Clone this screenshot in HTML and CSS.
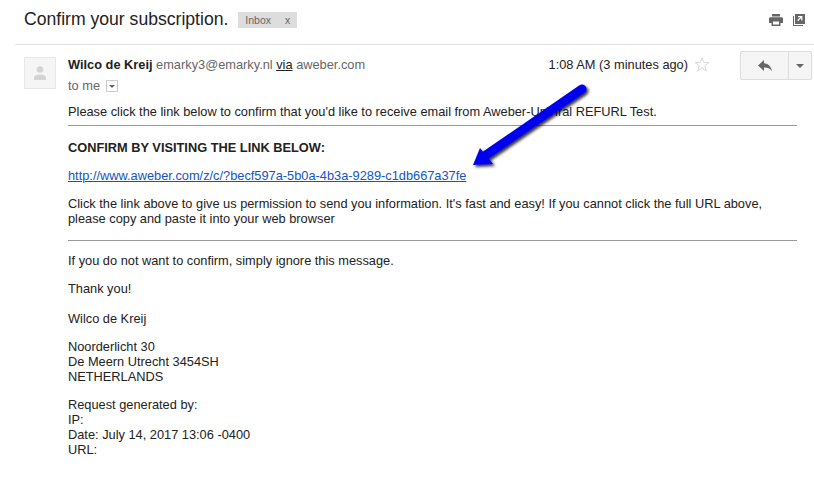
FILE: index.html
```html
<!DOCTYPE html>
<html lang="en">
<head>
    <meta charset="UTF-8">
    <meta name="viewport" content="width=device-width, initial-scale=1.0">
    <title>Confirm your subscription.</title>
    <link rel="stylesheet" href="styles.css">
</head>
<body>
    <header class="subject-bar">
        <h1>Confirm your subscription.</h1>
        <span class="label">Inbox <span class="label-x">x</span></span>
        <div class="top-icons">
            <svg width="14" height="12" viewBox="0 0 14 12"><path fill="#666" fill-rule="evenodd" d="M3 0h8v2.500H3zM1.200 3.300h11.600A1.200 1.200 0 0 1 14 4.500V9h-2.500v3h-9V9H0V4.500a1.200 1.200 0 0 1 1.200-1.200zM4 7.500v3h6v-3z"/></svg>
            <svg width="12" height="12" viewBox="0 0 12 12"><path fill="#666" fill-rule="evenodd" d="M2 0h10v10H2zM5 2v1.200h2.300L4.200 6.300l.9.900L8.200 4.100v2.300h1.200V2zM0 2h1v9h9v1H0z"/></svg>
        </div>
    </header>
    <main class="message">
        <div class="avatar">
            <svg width="14" height="15" viewBox="0 0 14 15"><circle cx="7" cy="3.500" r="3.300" fill="#d4d4d4"/><path fill="#d4d4d4" d="M1 14v-2.500C1 9.500 4.500 8.500 7 8.500s6 1 6 3V14z"/></svg>
        </div>
        <div class="content">
            <div class="meta">
                <div class="sender">
                    <div><strong>Wilco de Kreij</strong> <span class="grey">emarky3@emarky.nl</span> <u>via</u> <span class="grey">aweber.com</span></div>
                    <div class="to grey">to me <span class="to-arrow"></span></div>
                </div>
                <div class="time">1:08 AM (3 minutes ago)</div>
                <svg class="star" width="16" height="15" viewBox="0 0 16 15"><path fill="none" stroke="#d8d8d8" d="M8 .800l1.800 4.700h5.200l-4.200 3.200 1.600 5.200L8 10.800l-4.400 3.100 1.600-5.200L1 5.500h5.200z"/></svg>
                <div class="reply-btn">
                    <div class="reply-main">
                        <svg width="14" height="12" viewBox="0 0 14 12"><path fill="#666" d="M6 0v3.200c4.500.3 7 3.300 8 8-1.700-2.800-4-3.800-8-3.800V11L0 5.500z"/></svg>
                    </div>
                    <div class="reply-more"><span class="caret"></span></div>
                </div>
            </div>
            <div class="body">
                <p>Please click the link below to confirm that you'd like to receive email from Aweber-UpViral REFURL Test.</p>
                <hr class="rule-top">
                <p><strong>CONFIRM BY VISITING THE LINK BELOW:</strong></p>
                <p><a href="#">http://www.aweber.com/z/c/?becf597a-5b0a-4b3a-9289-c1db667a37fe</a></p>
                <p>Click the link above to give us permission to send you information. It's fast and easy! If you cannot click the full URL above, please copy and paste it into your web browser</p>
                <hr class="rule-bottom">
                <p>If you do not want to confirm, simply ignore this message.</p>
                <p class="thanks">Thank you!</p>
                <p>Wilco de Kreij</p>
                <p>Noorderlicht 30<br>De Meern Utrecht 3454SH<br>NETHERLANDS</p>
                <p>Request generated by:<br>IP:<br>Date: July 14, 2017 13:06 -0400<br>URL:</p>
            </div>
        </div>
    </main>
    <svg class="arrow" width="130" height="100" viewBox="0 0 130 100">
        <defs>
            <filter id="arrow-shadow" x="-20%" y="-20%" width="140%" height="140%">
                <feDropShadow dx="2" dy="2" stdDeviation="1.500" flood-color="#000" flood-opacity="0.8"/>
            </filter>
        </defs>
        <g filter="url(#arrow-shadow)" fill="#0000ee">
            <path d="M117 9 L21 75" stroke="#0000ee" stroke-width="9" stroke-linecap="round"/>
            <path d="M8 85 L15 68 L28 84 Z"/>
        </g>
    </svg>
</body>
</html>
```

FILE: styles.css
```css
body {
    margin: 0;
    font-family: "Liberation Sans", Arial, sans-serif;
    font-size: 12.800px;
    color: #222;
    background: white;
}

.subject-bar {
    display: flex;
    align-items: center;
    height: 45px;
    margin-left: 15px;
    padding: 0 9px 5px 9px;
    box-sizing: border-box;
    border-bottom: 1px solid #e0e0e0;
}

.subject-bar h1 {
    margin: 0;
    font-size: 17.600px;
    font-weight: normal;
    color: #222;
}

.label {
    margin-left: 10px;
    padding: 0 7px;
    height: 16px;
    line-height: 16px;
    background: #ddd;
    color: #666;
    font-size: 10.500px;
}

.label-x {
    margin-left: 11px;
}

.top-icons {
    display: flex;
    align-items: center;
    gap: 10px;
    margin-left: auto;
}

.message {
    display: flex;
    padding: 12px 2px 0 24px;
}

.avatar {
    display: flex;
    align-items: center;
    justify-content: center;
    flex: none;
    width: 30px;
    height: 30px;
    background: #f5f5f5;
    border: 1px solid #e8e8e8;
}

.content {
    flex: 1;
    margin-left: 12px;
}

.meta {
    display: flex;
    align-items: flex-start;
    height: 47px;
}

.sender {
    flex: 1;
    line-height: 15px;
}

.to {
    margin-top: 6px;
}

.to-arrow {
    position: relative;
    display: inline-block;
    width: 10px;
    height: 10px;
    border: 1px solid #ccc;
    vertical-align: -2px;
    margin-left: 2px;
}

.to-arrow::after {
    content: "";
    position: absolute;
    left: 2px;
    top: 4px;
    border-top: 3px solid #666;
    border-left: 3px solid transparent;
    border-right: 3px solid transparent;
}

.grey {
    color: #666;
}

.time {
    line-height: 15px;
}

.star {
    margin-left: 6px;
}

.reply-btn {
    display: flex;
    height: 27px;
    margin-left: 30px;
    margin-top: -6px;
    border: 1px solid #dcdcdc;
    border-radius: 2px;
    background: #f5f5f5;
}

.reply-main {
    display: flex;
    align-items: center;
    justify-content: center;
    width: 47px;
    border-right: 1px solid #dcdcdc;
}

.reply-more {
    display: flex;
    align-items: center;
    justify-content: center;
    width: 22px;
}

.caret {
    border-top: 4px solid #666;
    border-left: 4px solid transparent;
    border-right: 4px solid transparent;
}

.body {
    padding-right: 15px;
    line-height: 15px;
}

.body p {
    margin: 0 0 13px;
}

.body .thanks {
    margin-bottom: 15px;
}

.body hr {
    border: 0;
    border-top: 1px solid #999;
}

.body .rule-top {
    margin: -7px 0 14px;
}

.body .rule-bottom {
    margin: 14px 0 12px;
}

.body a {
    color: #1155cc;
}

.arrow {
    position: absolute;
    left: 465px;
    top: 80px;
}
```
